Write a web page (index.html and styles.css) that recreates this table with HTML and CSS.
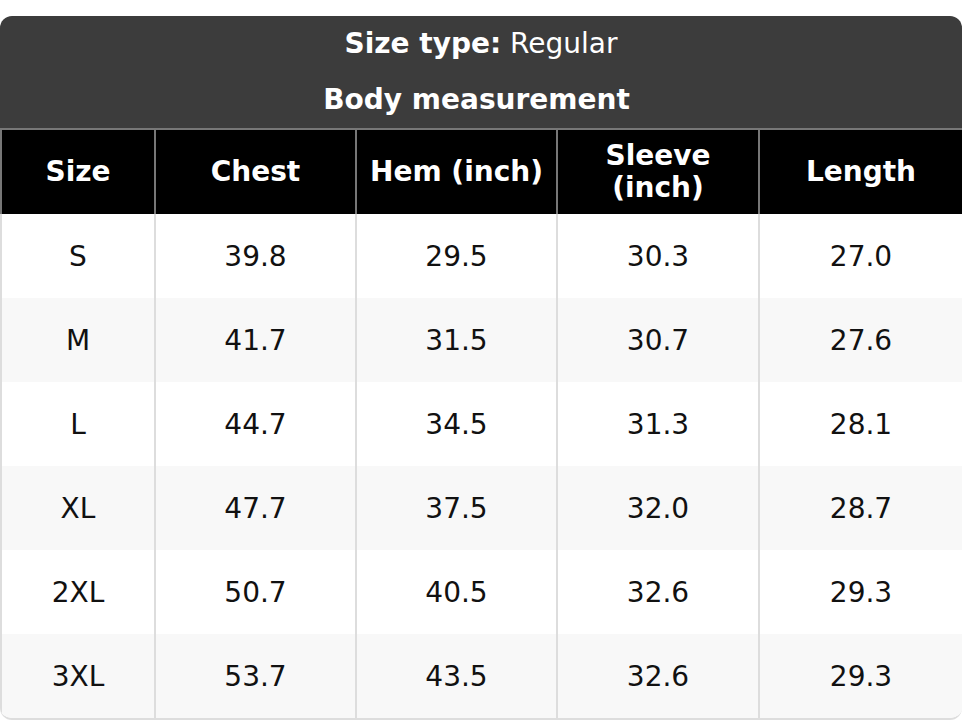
FILE: index.html
```html
<!DOCTYPE html>
<html>
<head>
<meta charset="utf-8">
<link rel="stylesheet" href="styles.css">
</head>
<body>
<div class="chart">
  <div class="title">
    <div class="title-line"><b>Size type:</b> Regular</div>
    <div class="title-line title-sub"><b>Body measurement</b></div>
  </div>
  <table class="sizes">
    <colgroup>
      <col class="c1"><col class="c2"><col class="c3"><col class="c4"><col class="c5">
    </colgroup>
    <thead>
      <tr><th>Size</th><th>Chest</th><th>Hem (inch)</th><th>Sleeve<br>(inch)</th><th>Length</th></tr>
    </thead>
    <tbody>
      <tr><td>S</td><td>39.8</td><td>29.5</td><td>30.3</td><td>27.0</td></tr>
      <tr><td>M</td><td>41.7</td><td>31.5</td><td>30.7</td><td>27.6</td></tr>
      <tr><td>L</td><td>44.7</td><td>34.5</td><td>31.3</td><td>28.1</td></tr>
      <tr><td>XL</td><td>47.7</td><td>37.5</td><td>32.0</td><td>28.7</td></tr>
      <tr><td>2XL</td><td>50.7</td><td>40.5</td><td>32.6</td><td>29.3</td></tr>
      <tr><td>3XL</td><td>53.7</td><td>43.5</td><td>32.6</td><td>29.3</td></tr>
    </tbody>
  </table>
</div>
</body>
</html>
```
FILE: styles.css
```css
html, body {
  margin: 0;
  padding: 0;
  background: #ffffff;
}
body {
  padding-top: 16px;
  font-family: "DejaVu Sans", "Liberation Sans", sans-serif;
  font-size: 28px;
  color: #111111;
}
.chart {
  width: 962px;
  border-radius: 12px;
  overflow: hidden;
  background: #ffffff;
  box-sizing: border-box;
  border-bottom: 2px solid #dddddd;
}
.title {
  background: #3c3c3c;
  color: #ffffff;
  text-align: center;
  border-bottom: 2px solid #777777;
}
.title-line {
  height: 55px;
  line-height: 55px;
}
.title-sub {
  height: 57px;
  line-height: 57px;
  padding-right: 9px;
}
.sizes {
  width: 962px;
  border-collapse: collapse;
  table-layout: fixed;
}
.c1 { width: 154px; }
.c2 { width: 201px; }
.c3 { width: 201px; }
.c4 { width: 202px; }
.c5 { width: 204px; }
.sizes th {
  background: #000000;
  color: #ffffff;
  font-weight: bold;
  height: 84px;
  padding: 0 4px;
  line-height: 32px;
  border-left: 2px solid #777777;
  border-right: 2px solid #777777;
  box-sizing: border-box;
}
.sizes td {
  height: 84px;
  padding: 2px 0 0 0;
  text-align: center;
  line-height: 32px;
  border-left: 2px solid #dddddd;
  border-right: 2px solid #dddddd;
  box-sizing: border-box;
}
.sizes tbody tr:nth-child(even) td {
  background: #f8f8f8;
}
```
